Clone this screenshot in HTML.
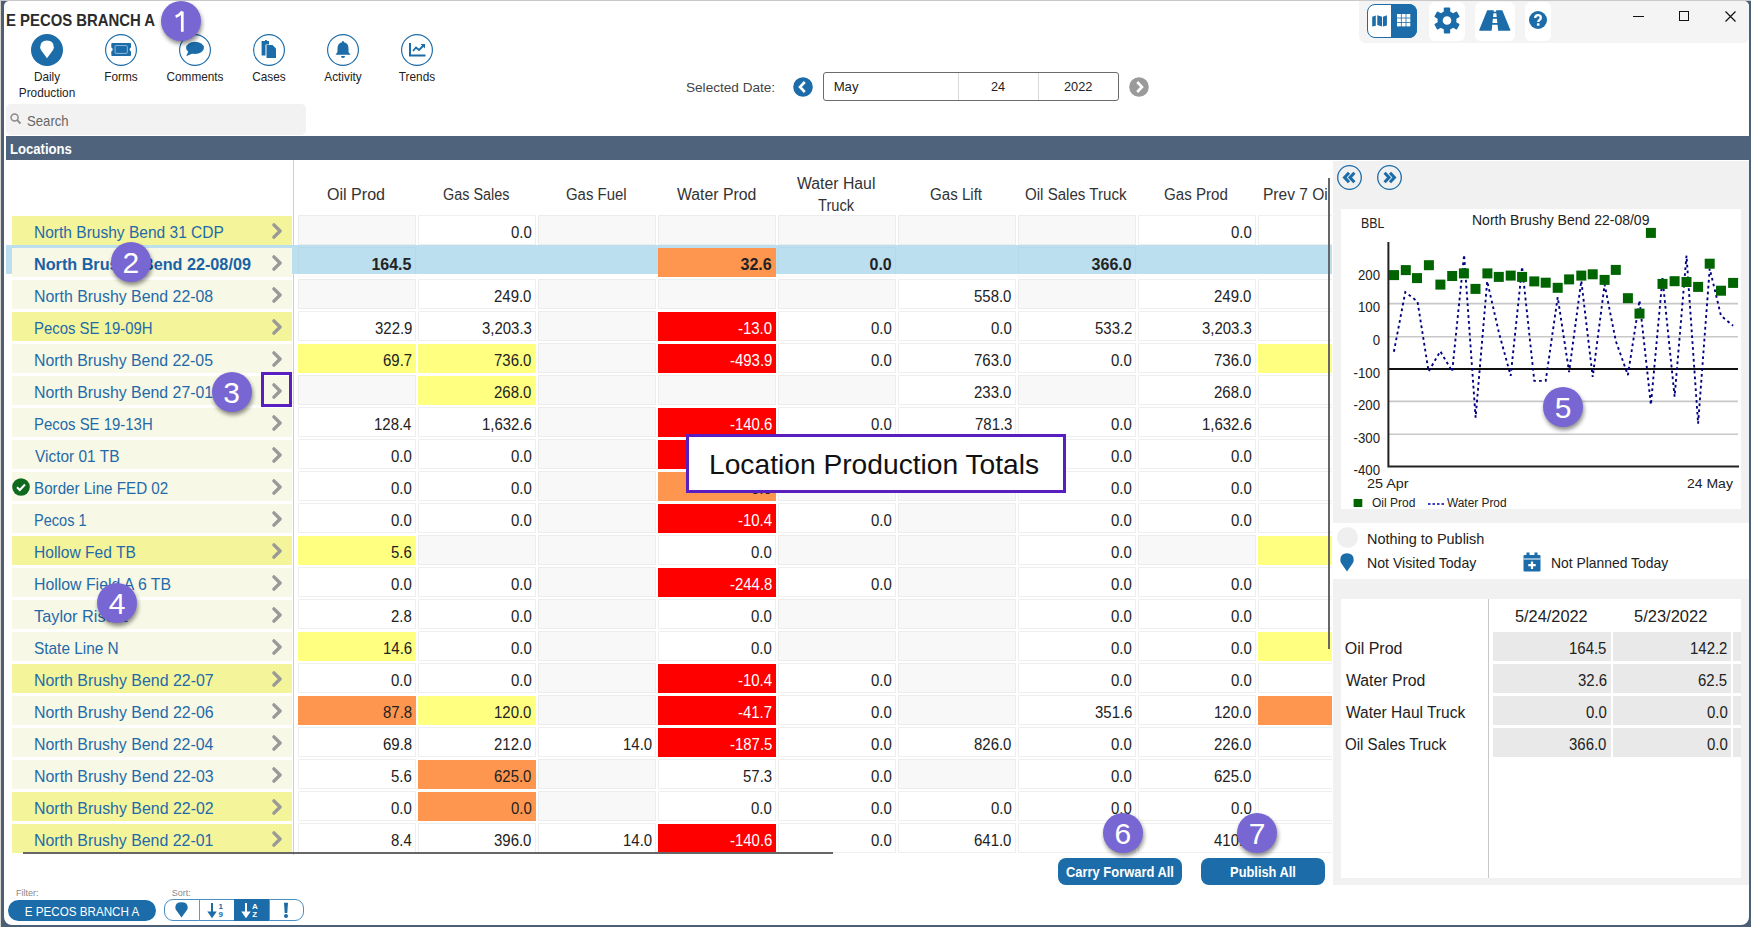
<!DOCTYPE html><html><head><meta charset="utf-8"><style>
html,body{margin:0;padding:0;}
body{width:1751px;height:927px;overflow:hidden;position:relative;background:#4b5f77;font-family:"Liberation Sans",sans-serif;}
.t{position:absolute;white-space:pre;}
.b{position:absolute;box-sizing:border-box;}
svg{position:absolute;overflow:visible;}
.badge{position:absolute;width:40px;height:40px;border-radius:50%;background:#7866d3;color:#fff;font-size:30px;line-height:41px;text-align:center;box-shadow:1px 3px 4px rgba(0,0,0,0.45);font-family:"Liberation Sans",sans-serif;}
</style></head><body>
<div class="b" style="left:0px;top:0px;width:1751px;height:1px;background:#c9c9c9;"></div>
<div class="b" style="left:0px;top:1px;width:1px;height:926px;background:#d9d6cf;"></div>
<div class="b" style="left:4px;top:1px;width:1745px;height:924px;background:#fff;border-radius:5px 5px 8px 8px;overflow:hidden;"></div>
<div class="b" style="left:1359px;top:1px;width:390px;height:42px;background:#f4f4f4;border-radius:0 6px 6px 7px;"></div>
<div class="b" style="left:1367px;top:4px;width:50px;height:34px;border:1px solid #1b6ca8;border-radius:8px;background:#fff;"></div>
<div class="b" style="left:1391px;top:4px;width:26px;height:34px;background:#1b6ca8;border-radius:0 8px 8px 0;"></div>
<svg style="left:1371px;top:12px" width="18" height="18" viewBox="0 0 18 18"><path d="M1.2 4.7 L4.8 3.5 L4.8 13.7 L1.2 14.6 Z M6.3 3.2 L11.1 4.7 L11.1 14.6 L6.3 13.1 Z M12 4.7 L15.9 3.2 L15.9 13.4 L12 14.6 Z" fill="#1b6ca8"/></svg>
<svg style="left:1397px;top:14px" width="14" height="13" viewBox="0 0 14 13"><g fill="#fff"><rect x="0.0" y="0.0" width="3.9" height="3.6"/><rect x="0.0" y="4.4" width="3.9" height="3.6"/><rect x="0.0" y="8.8" width="3.9" height="3.6"/><rect x="4.7" y="0.0" width="3.9" height="3.6"/><rect x="4.7" y="4.4" width="3.9" height="3.6"/><rect x="4.7" y="8.8" width="3.9" height="3.6"/><rect x="9.4" y="0.0" width="3.9" height="3.6"/><rect x="9.4" y="4.4" width="3.9" height="3.6"/><rect x="9.4" y="8.8" width="3.9" height="3.6"/></g></svg>
<div class="b" style="left:1429px;top:2px;width:36px;height:39px;background:#fff;border-radius:6px;"></div>
<svg style="left:1434px;top:7px" width="26" height="27" viewBox="-13 -13.5 26 27"><g fill="#1b6ca8"><rect x="-3.2" y="-13" width="6.4" height="6" rx="1" transform="rotate(0)"/><rect x="-3.2" y="-13" width="6.4" height="6" rx="1" transform="rotate(60)"/><rect x="-3.2" y="-13" width="6.4" height="6" rx="1" transform="rotate(120)"/><rect x="-3.2" y="-13" width="6.4" height="6" rx="1" transform="rotate(180)"/><rect x="-3.2" y="-13" width="6.4" height="6" rx="1" transform="rotate(240)"/><rect x="-3.2" y="-13" width="6.4" height="6" rx="1" transform="rotate(300)"/><circle r="9.5"/></g><circle r="4.3" fill="#fff"/></svg>
<div class="b" style="left:1475px;top:2px;width:40px;height:39px;background:#fff;border-radius:6px;"></div>
<svg style="left:1479px;top:10px" width="33" height="22" viewBox="0 0 33 22"><path d="M8.2 0.2 L14.78 0.2 L12.63 20.7 L0.9 20.7 Q0 20.7 0.2 19.9 Z M17.02 0.2 L23.3 0.2 L31.4 19.9 Q31.6 20.7 30.7 20.7 L19.17 20.7 Z M14.319999999999999 1.7 L17.48 1.7 L17.650000000000002 3.3 L14.149999999999999 3.3 ZM13.78 6.9 L18.02 6.9 L18.220000000000002 8.8 L13.58 8.8 ZM13.149999999999999 12.9 L18.650000000000002 12.9 L18.85 14.8 L12.95 14.8 Z" fill="#1b6ca8"/></svg>
<div class="b" style="left:1525px;top:2px;width:26px;height:39px;background:#fff;border-radius:6px;"></div>
<svg style="left:1529px;top:11px" width="18" height="18" viewBox="0 0 18 18"><circle cx="9" cy="9" r="9" fill="#1b6ca8"/><path d="M6.2 7 Q6.2 4.2 9 4.2 Q11.8 4.2 11.8 6.8 Q11.8 8.3 10.2 9.2 Q9.2 9.8 9.2 11" stroke="#fff" stroke-width="2.3" fill="none"/><rect x="7.9" y="12.3" width="2.6" height="2.4" fill="#fff"/></svg>
<div class="b" style="left:1633px;top:16px;width:11px;height:1.2px;background:#111;"></div>
<div class="b" style="left:1679px;top:11px;width:10px;height:10px;border:1.2px solid #111;"></div>
<svg style="left:1724.5px;top:11px" width="11" height="11" viewBox="0 0 11 11"><path d="M0.5 0.5 L10.5 10.5 M10.5 0.5 L0.5 10.5" stroke="#111" stroke-width="1.2"/></svg>
<div class="t" style="left:5.96px;top:11px;font-size:15.9px;line-height:19px;color:#2b2b2b;font-weight:700;transform:scaleX(0.9361);transform-origin:0 0;">E PECOS BRANCH A</div>
<svg style="left:31px;top:34px" width="32" height="32" viewBox="0 0 32 32"><circle cx="16" cy="16" r="16" fill="#1b6ca8"/><path d="M16 24.3 L10.5 16.8 Q9.2 15 9.2 13.3 Q9.2 6.6 16 6.6 Q22.8 6.6 22.8 13.3 Q22.8 15 21.5 16.8 Z" fill="#fff"/></svg>
<div class="t" style="left:-253px;width:600px;text-align:center;top:70px;font-size:12.6px;line-height:15px;color:#222;font-weight:400;transform:scaleX(0.9370);transform-origin:50% 0;">Daily</div>
<div class="t" style="left:-253px;width:600px;text-align:center;top:86px;font-size:12.6px;line-height:15px;color:#222;font-weight:400;transform:scaleX(0.9370);transform-origin:50% 0;">Production</div>
<svg style="left:105px;top:34px" width="32" height="32" viewBox="0 0 32 32"><circle cx="16" cy="16" r="15.4" fill="none" stroke="#1b6ca8" stroke-width="1.15"/><path d="M7.3 9 L25 9 Q26 9 26 10 L26 13.6 Q24.6 14.2 24.6 15.5 Q24.6 16.8 26 17.4 L26 21 Q26 22 25 22 L7.3 22 Q6.3 22 6.3 21 L6.3 17.4 Q7.7 16.8 7.7 15.5 Q7.7 14.2 6.3 13.6 L6.3 10 Q6.3 9 7.3 9 Z" fill="#1b6ca8"/><rect x="10.1" y="11.6" width="12.2" height="7.8" rx="0.8" fill="none" stroke="#9cc2e2" stroke-width="0.9"/></svg>
<div class="t" style="left:-179px;width:600px;text-align:center;top:70px;font-size:12.6px;line-height:15px;color:#222;font-weight:400;transform:scaleX(0.9370);transform-origin:50% 0;">Forms</div>
<svg style="left:179px;top:34px" width="32" height="32" viewBox="0 0 32 32"><circle cx="16" cy="16" r="15.4" fill="none" stroke="#1b6ca8" stroke-width="1.15"/><ellipse cx="16" cy="13.9" rx="8.9" ry="6.2" fill="#1b6ca8"/><path d="M9.8 16.5 L7.2 22.3 L14 19.3 Z" fill="#1b6ca8"/></svg>
<div class="t" style="left:-105px;width:600px;text-align:center;top:70px;font-size:12.6px;line-height:15px;color:#222;font-weight:400;transform:scaleX(0.9370);transform-origin:50% 0;">Comments</div>
<svg style="left:253px;top:34px" width="32" height="32" viewBox="0 0 32 32"><circle cx="16" cy="16" r="15.4" fill="none" stroke="#1b6ca8" stroke-width="1.15"/><path d="M8.6 7 L12 7 L12 6 L13.8 6 L13.8 7 L16 7 L16 10.5 L12.5 10.5 L12.5 21.5 L8.6 21.5 Z" fill="#1b6ca8"/><path d="M13.5 11 L19.5 11 L23 14.5 L23 24 L13.5 24 Z" fill="#1b6ca8"/></svg>
<div class="t" style="left:-31px;width:600px;text-align:center;top:70px;font-size:12.6px;line-height:15px;color:#222;font-weight:400;transform:scaleX(0.9370);transform-origin:50% 0;">Cases</div>
<svg style="left:327px;top:34px" width="32" height="32" viewBox="0 0 32 32"><circle cx="16" cy="16" r="15.4" fill="none" stroke="#1b6ca8" stroke-width="1.15"/><path d="M16 7 Q17 7 17 8.2 Q21.5 9.2 21.5 14.5 L21.5 18 L23.5 20.8 L8.5 20.8 L10.5 18 L10.5 14.5 Q10.5 9.2 15 8.2 Q15 7 16 7 Z" fill="#1b6ca8"/><path d="M14 22 L18 22 Q18 24 16 24 Q14 24 14 22 Z" fill="#1b6ca8"/></svg>
<div class="t" style="left:43px;width:600px;text-align:center;top:70px;font-size:12.6px;line-height:15px;color:#222;font-weight:400;transform:scaleX(0.9370);transform-origin:50% 0;">Activity</div>
<svg style="left:401px;top:34px" width="32" height="32" viewBox="0 0 32 32"><circle cx="16" cy="16" r="15.4" fill="none" stroke="#1b6ca8" stroke-width="1.15"/><path d="M9 9 L9 21.5 L24.5 21.5" fill="none" stroke="#1b6ca8" stroke-width="2"/><path d="M12 17 L15 13.5 L18 16 L22.5 11.5" fill="none" stroke="#1b6ca8" stroke-width="1.8"/><path d="M19.5 10 L24 10 L24 14.5 Z" fill="#1b6ca8"/></svg>
<div class="t" style="left:117px;width:600px;text-align:center;top:70px;font-size:12.6px;line-height:15px;color:#222;font-weight:400;transform:scaleX(0.9370);transform-origin:50% 0;">Trends</div>
<div class="t" style="left:685.62px;top:80px;font-size:13.4px;line-height:16px;color:#444;font-weight:400;transform:scaleX(1.0148);transform-origin:0 0;">Selected Date:</div>
<svg style="left:793px;top:76.5px" width="20" height="20" viewBox="0 0 20 20"><circle cx="10" cy="10" r="9.8" fill="#1b6ca8"/><path d="M11.8 5 L7 10 L11.8 15" fill="none" stroke="#fff" stroke-width="2.6"/></svg>
<div class="b" style="left:823px;top:72px;width:296px;height:29px;border:1px solid #6b6b6b;border-radius:3px;background:#fff;"></div>
<div class="b" style="left:958px;top:73px;width:1px;height:27px;background:#d9d9d9;"></div>
<div class="b" style="left:1038px;top:73px;width:1px;height:27px;background:#d9d9d9;"></div>
<div class="t" style="left:833.64px;top:79px;font-size:13.2px;line-height:16px;color:#222;font-weight:400;">May</div>
<div class="t" style="left:991.17px;top:79px;font-size:13.2px;line-height:16px;color:#222;font-weight:400;transform:scaleX(0.9615);transform-origin:0 0;">24</div>
<div class="t" style="left:1064.26px;top:79px;font-size:13.2px;line-height:16px;color:#222;font-weight:400;transform:scaleX(0.9674);transform-origin:0 0;">2022</div>
<svg style="left:1129px;top:77px" width="20" height="20" viewBox="0 0 20 20"><circle cx="10" cy="10" r="9.8" fill="#9a9a9a"/><path d="M8.2 5 L13 10 L8.2 15" fill="none" stroke="#fff" stroke-width="2.6"/></svg>
<div class="b" style="left:6px;top:104px;width:300px;height:31px;background:#f2f2f2;border-radius:5px;"></div>
<svg style="left:10px;top:113px" width="12" height="12" viewBox="0 0 12 12"><circle cx="4.6" cy="4.6" r="3.5" fill="none" stroke="#8a8a8a" stroke-width="1.5"/><path d="M7.2 7.2 L10.5 10.5" stroke="#8a8a8a" stroke-width="1.8"/></svg>
<div class="t" style="left:26.84px;top:113px;font-size:14.1px;line-height:17px;color:#666;font-weight:400;transform:scaleX(0.9324);transform-origin:0 0;">Search</div>
<div class="b" style="left:6px;top:136px;width:1745px;height:24px;background:#4f647c;"></div>
<div class="t" style="left:9.5px;top:141px;font-size:14.5px;line-height:17px;color:#fff;font-weight:700;transform:scaleX(0.9040);transform-origin:0 0;">Locations</div>
<div class="b" style="left:0;top:0;width:1332px;height:855px;overflow:hidden;">
<div class="t" style="left:327.0px;top:185px;font-size:16px;line-height:19px;color:#333;font-weight:400;transform:scaleX(1.0036);transform-origin:0 0;">Oil Prod</div>
<div class="t" style="left:442.68px;top:185px;font-size:16px;line-height:19px;color:#333;font-weight:400;transform:scaleX(0.8996);transform-origin:0 0;">Gas Sales</div>
<div class="t" style="left:565.95px;top:185px;font-size:16px;line-height:19px;color:#333;font-weight:400;transform:scaleX(0.9327);transform-origin:0 0;">Gas Fuel</div>
<div class="t" style="left:677.0px;top:185px;font-size:16px;line-height:19px;color:#333;font-weight:400;transform:scaleX(0.9874);transform-origin:0 0;">Water Prod</div>
<div class="t" style="left:796.9px;top:174px;font-size:16px;line-height:19px;color:#333;font-weight:400;transform:scaleX(0.9872);transform-origin:0 0;">Water Haul</div>
<div class="t" style="left:817.91px;top:196px;font-size:16px;line-height:19px;color:#333;font-weight:400;transform:scaleX(0.9170);transform-origin:0 0;">Truck</div>
<div class="t" style="left:929.84px;top:185px;font-size:16px;line-height:19px;color:#333;font-weight:400;transform:scaleX(0.9440);transform-origin:0 0;">Gas Lift</div>
<div class="t" style="left:1025.05px;top:185px;font-size:16px;line-height:19px;color:#333;font-weight:400;transform:scaleX(0.9436);transform-origin:0 0;">Oil Sales Truck</div>
<div class="t" style="left:1164.04px;top:185px;font-size:16px;line-height:19px;color:#333;font-weight:400;transform:scaleX(0.9443);transform-origin:0 0;">Gas Prod</div>
<div class="b" style="left:1200px;top:170px;width:127px;height:40px;overflow:hidden;">
<div class="b" style="left:-1200px;top:-170px;width:1751px;height:300px;">
<div class="t" style="left:1263.3px;top:185px;font-size:16px;line-height:19px;color:#333;font-weight:400;transform:scaleX(0.9720);transform-origin:0 0;">Prev 7 Oil Prod</div>
</div></div>
<div class="b" style="left:293px;top:160px;width:1px;height:695px;background:#cfcfcf;"></div>
<div class="b" style="left:6px;top:245px;width:1326px;height:29px;background:#bbdfee;"></div>
<div class="b" style="left:12px;top:216px;width:280px;height:29px;background:#f4f49a;"></div>
<div class="t" style="left:33.56px;top:222px;font-size:16.4px;line-height:20px;color:#1f6aaa;font-weight:400;transform:scaleX(0.9474);transform-origin:0 0;">North Brushy Bend 31 CDP</div>
<svg style="left:271px;top:223px" width="14" height="16" viewBox="0 0 14 16"><path d="M2.9 1.9 L9.1 8 L2.9 14.1" fill="none" stroke="#999" stroke-width="3.4" stroke-linecap="round" stroke-linejoin="round"/></svg>
<div class="b" style="left:298px;top:215px;width:118px;height:30px;background:#f8f8f8;border:1px solid #ececec;"></div>
<div class="b" style="left:418px;top:215px;width:118px;height:30px;background:#fff;border:1px solid #efefef;"></div>
<div class="t" style="left:511.2px;top:223px;font-size:16px;line-height:19px;color:#222;font-weight:400;transform:scaleX(0.9350);transform-origin:0 0;">0.0</div>
<div class="b" style="left:538px;top:215px;width:118px;height:30px;background:#f8f8f8;border:1px solid #ececec;"></div>
<div class="b" style="left:658px;top:215px;width:118px;height:30px;background:#f8f8f8;border:1px solid #ececec;"></div>
<div class="b" style="left:778px;top:215px;width:118px;height:30px;background:#f8f8f8;border:1px solid #ececec;"></div>
<div class="b" style="left:898px;top:215px;width:118px;height:30px;background:#f8f8f8;border:1px solid #ececec;"></div>
<div class="b" style="left:1018px;top:215px;width:118px;height:30px;background:#f8f8f8;border:1px solid #ececec;"></div>
<div class="b" style="left:1138px;top:215px;width:118px;height:30px;background:#fff;border:1px solid #efefef;"></div>
<div class="t" style="left:1231.2px;top:223px;font-size:16px;line-height:19px;color:#222;font-weight:400;transform:scaleX(0.9350);transform-origin:0 0;">0.0</div>
<div class="b" style="left:1258px;top:215px;width:118px;height:30px;background:#fff;border:1px solid #efefef;"></div>
<div class="b" style="left:12px;top:248px;width:280px;height:29px;background:#f8f8e6;"></div>
<div class="t" style="left:33.93px;top:255px;font-size:16px;line-height:19px;color:#1862a6;font-weight:700;transform:scaleX(1.0122);transform-origin:0 0;">North Brushy Bend 22-08/09</div>
<svg style="left:271px;top:255px" width="14" height="16" viewBox="0 0 14 16"><path d="M2.9 1.9 L9.1 8 L2.9 14.1" fill="none" stroke="#999" stroke-width="3.4" stroke-linecap="round" stroke-linejoin="round"/></svg>
<div class="b" style="left:298px;top:247px;width:118px;height:30px;border:1px solid rgba(0,0,0,0.03);"></div>
<div class="t" style="left:371.42px;top:255px;font-size:16px;line-height:19px;color:#222;font-weight:700;">164.5</div>
<div class="b" style="left:658px;top:248px;width:118px;height:29px;background:#ff964f;"></div>
<div class="t" style="left:740.54px;top:255px;font-size:16px;line-height:19px;color:#222;font-weight:700;">32.6</div>
<div class="b" style="left:778px;top:247px;width:118px;height:30px;border:1px solid rgba(0,0,0,0.03);"></div>
<div class="t" style="left:869.5px;top:255px;font-size:16px;line-height:19px;color:#222;font-weight:700;">0.0</div>
<div class="b" style="left:1018px;top:247px;width:118px;height:30px;border:1px solid rgba(0,0,0,0.03);"></div>
<div class="t" style="left:1091.58px;top:255px;font-size:16px;line-height:19px;color:#222;font-weight:700;">366.0</div>
<div class="b" style="left:12px;top:280px;width:280px;height:29px;background:#f8f8e6;"></div>
<div class="t" style="left:33.53px;top:286px;font-size:16.4px;line-height:20px;color:#1f6aaa;font-weight:400;transform:scaleX(0.9687);transform-origin:0 0;">North Brushy Bend 22-08</div>
<svg style="left:271px;top:287px" width="14" height="16" viewBox="0 0 14 16"><path d="M2.9 1.9 L9.1 8 L2.9 14.1" fill="none" stroke="#999" stroke-width="3.4" stroke-linecap="round" stroke-linejoin="round"/></svg>
<div class="b" style="left:298px;top:279px;width:118px;height:30px;background:#f8f8f8;border:1px solid #ececec;"></div>
<div class="b" style="left:418px;top:279px;width:118px;height:30px;background:#fff;border:1px solid #efefef;"></div>
<div class="t" style="left:494.45px;top:287px;font-size:16px;line-height:19px;color:#222;font-weight:400;transform:scaleX(0.9350);transform-origin:0 0;">249.0</div>
<div class="b" style="left:538px;top:279px;width:118px;height:30px;background:#f8f8f8;border:1px solid #ececec;"></div>
<div class="b" style="left:658px;top:279px;width:118px;height:30px;background:#f8f8f8;border:1px solid #ececec;"></div>
<div class="b" style="left:778px;top:279px;width:118px;height:30px;background:#f8f8f8;border:1px solid #ececec;"></div>
<div class="b" style="left:898px;top:279px;width:118px;height:30px;background:#fff;border:1px solid #efefef;"></div>
<div class="t" style="left:974.45px;top:287px;font-size:16px;line-height:19px;color:#222;font-weight:400;transform:scaleX(0.9350);transform-origin:0 0;">558.0</div>
<div class="b" style="left:1018px;top:279px;width:118px;height:30px;background:#f8f8f8;border:1px solid #ececec;"></div>
<div class="b" style="left:1138px;top:279px;width:118px;height:30px;background:#fff;border:1px solid #efefef;"></div>
<div class="t" style="left:1214.45px;top:287px;font-size:16px;line-height:19px;color:#222;font-weight:400;transform:scaleX(0.9350);transform-origin:0 0;">249.0</div>
<div class="b" style="left:1258px;top:279px;width:118px;height:30px;background:#fff;border:1px solid #efefef;"></div>
<div class="b" style="left:12px;top:312px;width:280px;height:29px;background:#f4f49a;"></div>
<div class="t" style="left:33.61px;top:318px;font-size:16.4px;line-height:20px;color:#1f6aaa;font-weight:400;transform:scaleX(0.9103);transform-origin:0 0;">Pecos SE 19-09H</div>
<svg style="left:271px;top:319px" width="14" height="16" viewBox="0 0 14 16"><path d="M2.9 1.9 L9.1 8 L2.9 14.1" fill="none" stroke="#999" stroke-width="3.4" stroke-linecap="round" stroke-linejoin="round"/></svg>
<div class="b" style="left:298px;top:311px;width:118px;height:30px;background:#fff;border:1px solid #efefef;"></div>
<div class="t" style="left:374.6px;top:319px;font-size:16px;line-height:19px;color:#222;font-weight:400;transform:scaleX(0.9350);transform-origin:0 0;">322.9</div>
<div class="b" style="left:418px;top:311px;width:118px;height:30px;background:#fff;border:1px solid #efefef;"></div>
<div class="t" style="left:482.18px;top:319px;font-size:16px;line-height:19px;color:#222;font-weight:400;transform:scaleX(0.9350);transform-origin:0 0;">3,203.3</div>
<div class="b" style="left:538px;top:311px;width:118px;height:30px;background:#f8f8f8;border:1px solid #ececec;"></div>
<div class="b" style="left:658px;top:312px;width:118px;height:29px;background:#ff0000;"></div>
<div class="t" style="left:737.89px;top:319px;font-size:16px;line-height:19px;color:#fff;font-weight:400;transform:scaleX(0.9350);transform-origin:0 0;">-13.0</div>
<div class="b" style="left:778px;top:311px;width:118px;height:30px;background:#fff;border:1px solid #efefef;"></div>
<div class="t" style="left:871.2px;top:319px;font-size:16px;line-height:19px;color:#222;font-weight:400;transform:scaleX(0.9350);transform-origin:0 0;">0.0</div>
<div class="b" style="left:898px;top:311px;width:118px;height:30px;background:#fff;border:1px solid #efefef;"></div>
<div class="t" style="left:991.2px;top:319px;font-size:16px;line-height:19px;color:#222;font-weight:400;transform:scaleX(0.9350);transform-origin:0 0;">0.0</div>
<div class="b" style="left:1018px;top:311px;width:118px;height:30px;background:#fff;border:1px solid #efefef;"></div>
<div class="t" style="left:1094.6px;top:319px;font-size:16px;line-height:19px;color:#222;font-weight:400;transform:scaleX(0.9350);transform-origin:0 0;">533.2</div>
<div class="b" style="left:1138px;top:311px;width:118px;height:30px;background:#fff;border:1px solid #efefef;"></div>
<div class="t" style="left:1202.18px;top:319px;font-size:16px;line-height:19px;color:#222;font-weight:400;transform:scaleX(0.9350);transform-origin:0 0;">3,203.3</div>
<div class="b" style="left:1258px;top:311px;width:118px;height:30px;background:#fff;border:1px solid #efefef;"></div>
<div class="b" style="left:12px;top:344px;width:280px;height:29px;background:#f8f8e6;"></div>
<div class="t" style="left:33.53px;top:350px;font-size:16.4px;line-height:20px;color:#1f6aaa;font-weight:400;transform:scaleX(0.9679);transform-origin:0 0;">North Brushy Bend 22-05</div>
<svg style="left:271px;top:351px" width="14" height="16" viewBox="0 0 14 16"><path d="M2.9 1.9 L9.1 8 L2.9 14.1" fill="none" stroke="#999" stroke-width="3.4" stroke-linecap="round" stroke-linejoin="round"/></svg>
<div class="b" style="left:298px;top:344px;width:118px;height:29px;background:#ffff80;"></div>
<div class="t" style="left:382.98px;top:351px;font-size:16px;line-height:19px;color:#222;font-weight:400;transform:scaleX(0.9350);transform-origin:0 0;">69.7</div>
<div class="b" style="left:418px;top:344px;width:118px;height:29px;background:#ffff80;"></div>
<div class="t" style="left:494.45px;top:351px;font-size:16px;line-height:19px;color:#222;font-weight:400;transform:scaleX(0.9350);transform-origin:0 0;">736.0</div>
<div class="b" style="left:538px;top:343px;width:118px;height:30px;background:#f8f8f8;border:1px solid #ececec;"></div>
<div class="b" style="left:658px;top:344px;width:118px;height:29px;background:#ff0000;"></div>
<div class="t" style="left:729.66px;top:351px;font-size:16px;line-height:19px;color:#fff;font-weight:400;transform:scaleX(0.9350);transform-origin:0 0;">-493.9</div>
<div class="b" style="left:778px;top:343px;width:118px;height:30px;background:#fff;border:1px solid #efefef;"></div>
<div class="t" style="left:871.2px;top:351px;font-size:16px;line-height:19px;color:#222;font-weight:400;transform:scaleX(0.9350);transform-origin:0 0;">0.0</div>
<div class="b" style="left:898px;top:343px;width:118px;height:30px;background:#fff;border:1px solid #efefef;"></div>
<div class="t" style="left:974.45px;top:351px;font-size:16px;line-height:19px;color:#222;font-weight:400;transform:scaleX(0.9350);transform-origin:0 0;">763.0</div>
<div class="b" style="left:1018px;top:343px;width:118px;height:30px;background:#fff;border:1px solid #efefef;"></div>
<div class="t" style="left:1111.2px;top:351px;font-size:16px;line-height:19px;color:#222;font-weight:400;transform:scaleX(0.9350);transform-origin:0 0;">0.0</div>
<div class="b" style="left:1138px;top:343px;width:118px;height:30px;background:#fff;border:1px solid #efefef;"></div>
<div class="t" style="left:1214.45px;top:351px;font-size:16px;line-height:19px;color:#222;font-weight:400;transform:scaleX(0.9350);transform-origin:0 0;">736.0</div>
<div class="b" style="left:1258px;top:344px;width:118px;height:29px;background:#ffff80;"></div>
<div class="b" style="left:12px;top:376px;width:280px;height:29px;background:#f8f8e6;"></div>
<div class="t" style="left:33.53px;top:382px;font-size:16.4px;line-height:20px;color:#1f6aaa;font-weight:400;transform:scaleX(0.9687);transform-origin:0 0;">North Brushy Bend 27-01</div>
<svg style="left:271px;top:383px" width="14" height="16" viewBox="0 0 14 16"><path d="M2.9 1.9 L9.1 8 L2.9 14.1" fill="none" stroke="#999" stroke-width="3.4" stroke-linecap="round" stroke-linejoin="round"/></svg>
<div class="b" style="left:298px;top:375px;width:118px;height:30px;background:#f8f8f8;border:1px solid #ececec;"></div>
<div class="b" style="left:418px;top:376px;width:118px;height:29px;background:#ffff80;"></div>
<div class="t" style="left:494.45px;top:383px;font-size:16px;line-height:19px;color:#222;font-weight:400;transform:scaleX(0.9350);transform-origin:0 0;">268.0</div>
<div class="b" style="left:538px;top:375px;width:118px;height:30px;background:#f8f8f8;border:1px solid #ececec;"></div>
<div class="b" style="left:658px;top:375px;width:118px;height:30px;background:#f8f8f8;border:1px solid #ececec;"></div>
<div class="b" style="left:778px;top:375px;width:118px;height:30px;background:#f8f8f8;border:1px solid #ececec;"></div>
<div class="b" style="left:898px;top:375px;width:118px;height:30px;background:#fff;border:1px solid #efefef;"></div>
<div class="t" style="left:974.45px;top:383px;font-size:16px;line-height:19px;color:#222;font-weight:400;transform:scaleX(0.9350);transform-origin:0 0;">233.0</div>
<div class="b" style="left:1018px;top:375px;width:118px;height:30px;background:#f8f8f8;border:1px solid #ececec;"></div>
<div class="b" style="left:1138px;top:375px;width:118px;height:30px;background:#fff;border:1px solid #efefef;"></div>
<div class="t" style="left:1214.45px;top:383px;font-size:16px;line-height:19px;color:#222;font-weight:400;transform:scaleX(0.9350);transform-origin:0 0;">268.0</div>
<div class="b" style="left:1258px;top:375px;width:118px;height:30px;background:#fff;border:1px solid #efefef;"></div>
<div class="b" style="left:12px;top:408px;width:280px;height:29px;background:#f8f8e6;"></div>
<div class="t" style="left:33.6px;top:414px;font-size:16.4px;line-height:20px;color:#1f6aaa;font-weight:400;transform:scaleX(0.9111);transform-origin:0 0;">Pecos SE 19-13H</div>
<svg style="left:271px;top:415px" width="14" height="16" viewBox="0 0 14 16"><path d="M2.9 1.9 L9.1 8 L2.9 14.1" fill="none" stroke="#999" stroke-width="3.4" stroke-linecap="round" stroke-linejoin="round"/></svg>
<div class="b" style="left:298px;top:407px;width:118px;height:30px;background:#fff;border:1px solid #efefef;"></div>
<div class="t" style="left:374.3px;top:415px;font-size:16px;line-height:19px;color:#222;font-weight:400;transform:scaleX(0.9350);transform-origin:0 0;">128.4</div>
<div class="b" style="left:418px;top:407px;width:118px;height:30px;background:#fff;border:1px solid #efefef;"></div>
<div class="t" style="left:482.18px;top:415px;font-size:16px;line-height:19px;color:#222;font-weight:400;transform:scaleX(0.9350);transform-origin:0 0;">1,632.6</div>
<div class="b" style="left:538px;top:407px;width:118px;height:30px;background:#f8f8f8;border:1px solid #ececec;"></div>
<div class="b" style="left:658px;top:408px;width:118px;height:29px;background:#ff0000;"></div>
<div class="t" style="left:729.66px;top:415px;font-size:16px;line-height:19px;color:#fff;font-weight:400;transform:scaleX(0.9350);transform-origin:0 0;">-140.6</div>
<div class="b" style="left:778px;top:407px;width:118px;height:30px;background:#fff;border:1px solid #efefef;"></div>
<div class="t" style="left:871.2px;top:415px;font-size:16px;line-height:19px;color:#222;font-weight:400;transform:scaleX(0.9350);transform-origin:0 0;">0.0</div>
<div class="b" style="left:898px;top:407px;width:118px;height:30px;background:#fff;border:1px solid #efefef;"></div>
<div class="t" style="left:974.6px;top:415px;font-size:16px;line-height:19px;color:#222;font-weight:400;transform:scaleX(0.9350);transform-origin:0 0;">781.3</div>
<div class="b" style="left:1018px;top:407px;width:118px;height:30px;background:#fff;border:1px solid #efefef;"></div>
<div class="t" style="left:1111.2px;top:415px;font-size:16px;line-height:19px;color:#222;font-weight:400;transform:scaleX(0.9350);transform-origin:0 0;">0.0</div>
<div class="b" style="left:1138px;top:407px;width:118px;height:30px;background:#fff;border:1px solid #efefef;"></div>
<div class="t" style="left:1202.18px;top:415px;font-size:16px;line-height:19px;color:#222;font-weight:400;transform:scaleX(0.9350);transform-origin:0 0;">1,632.6</div>
<div class="b" style="left:1258px;top:407px;width:118px;height:30px;background:#fff;border:1px solid #efefef;"></div>
<div class="b" style="left:12px;top:440px;width:280px;height:29px;background:#f8f8e6;"></div>
<div class="t" style="left:34.8px;top:446px;font-size:16.4px;line-height:20px;color:#1f6aaa;font-weight:400;transform:scaleX(0.9428);transform-origin:0 0;">Victor 01 TB</div>
<svg style="left:271px;top:447px" width="14" height="16" viewBox="0 0 14 16"><path d="M2.9 1.9 L9.1 8 L2.9 14.1" fill="none" stroke="#999" stroke-width="3.4" stroke-linecap="round" stroke-linejoin="round"/></svg>
<div class="b" style="left:298px;top:439px;width:118px;height:30px;background:#fff;border:1px solid #efefef;"></div>
<div class="t" style="left:391.2px;top:447px;font-size:16px;line-height:19px;color:#222;font-weight:400;transform:scaleX(0.9350);transform-origin:0 0;">0.0</div>
<div class="b" style="left:418px;top:439px;width:118px;height:30px;background:#fff;border:1px solid #efefef;"></div>
<div class="t" style="left:511.2px;top:447px;font-size:16px;line-height:19px;color:#222;font-weight:400;transform:scaleX(0.9350);transform-origin:0 0;">0.0</div>
<div class="b" style="left:538px;top:439px;width:118px;height:30px;background:#f8f8f8;border:1px solid #ececec;"></div>
<div class="b" style="left:658px;top:440px;width:118px;height:29px;background:#ff0000;"></div>
<div class="t" style="left:729.66px;top:447px;font-size:16px;line-height:19px;color:#fff;font-weight:400;transform:scaleX(0.9350);transform-origin:0 0;">-140.6</div>
<div class="b" style="left:778px;top:439px;width:118px;height:30px;background:#f8f8f8;border:1px solid #ececec;"></div>
<div class="b" style="left:898px;top:439px;width:118px;height:30px;background:#f8f8f8;border:1px solid #ececec;"></div>
<div class="b" style="left:1018px;top:439px;width:118px;height:30px;background:#fff;border:1px solid #efefef;"></div>
<div class="t" style="left:1111.2px;top:447px;font-size:16px;line-height:19px;color:#222;font-weight:400;transform:scaleX(0.9350);transform-origin:0 0;">0.0</div>
<div class="b" style="left:1138px;top:439px;width:118px;height:30px;background:#fff;border:1px solid #efefef;"></div>
<div class="t" style="left:1231.2px;top:447px;font-size:16px;line-height:19px;color:#222;font-weight:400;transform:scaleX(0.9350);transform-origin:0 0;">0.0</div>
<div class="b" style="left:1258px;top:439px;width:118px;height:30px;background:#fff;border:1px solid #efefef;"></div>
<div class="b" style="left:12px;top:472px;width:280px;height:29px;background:#f8f8e6;"></div>
<div class="t" style="left:33.58px;top:478px;font-size:16.4px;line-height:20px;color:#1f6aaa;font-weight:400;transform:scaleX(0.9269);transform-origin:0 0;">Border Line FED 02</div>
<svg style="left:271px;top:479px" width="14" height="16" viewBox="0 0 14 16"><path d="M2.9 1.9 L9.1 8 L2.9 14.1" fill="none" stroke="#999" stroke-width="3.4" stroke-linecap="round" stroke-linejoin="round"/></svg>
<div class="b" style="left:298px;top:471px;width:118px;height:30px;background:#fff;border:1px solid #efefef;"></div>
<div class="t" style="left:391.2px;top:479px;font-size:16px;line-height:19px;color:#222;font-weight:400;transform:scaleX(0.9350);transform-origin:0 0;">0.0</div>
<div class="b" style="left:418px;top:471px;width:118px;height:30px;background:#fff;border:1px solid #efefef;"></div>
<div class="t" style="left:511.2px;top:479px;font-size:16px;line-height:19px;color:#222;font-weight:400;transform:scaleX(0.9350);transform-origin:0 0;">0.0</div>
<div class="b" style="left:538px;top:471px;width:118px;height:30px;background:#f8f8f8;border:1px solid #ececec;"></div>
<div class="b" style="left:658px;top:472px;width:118px;height:29px;background:#ff964f;"></div>
<div class="t" style="left:751.2px;top:479px;font-size:16px;line-height:19px;color:#222;font-weight:400;transform:scaleX(0.9350);transform-origin:0 0;">0.0</div>
<div class="b" style="left:778px;top:471px;width:118px;height:30px;background:#f8f8f8;border:1px solid #ececec;"></div>
<div class="b" style="left:898px;top:471px;width:118px;height:30px;background:#f8f8f8;border:1px solid #ececec;"></div>
<div class="b" style="left:1018px;top:471px;width:118px;height:30px;background:#fff;border:1px solid #efefef;"></div>
<div class="t" style="left:1111.2px;top:479px;font-size:16px;line-height:19px;color:#222;font-weight:400;transform:scaleX(0.9350);transform-origin:0 0;">0.0</div>
<div class="b" style="left:1138px;top:471px;width:118px;height:30px;background:#fff;border:1px solid #efefef;"></div>
<div class="t" style="left:1231.2px;top:479px;font-size:16px;line-height:19px;color:#222;font-weight:400;transform:scaleX(0.9350);transform-origin:0 0;">0.0</div>
<div class="b" style="left:1258px;top:471px;width:118px;height:30px;background:#fff;border:1px solid #efefef;"></div>
<div class="b" style="left:12px;top:504px;width:280px;height:29px;background:#f8f8e6;"></div>
<div class="t" style="left:33.64px;top:510px;font-size:16.4px;line-height:20px;color:#1f6aaa;font-weight:400;transform:scaleX(0.8876);transform-origin:0 0;">Pecos 1</div>
<svg style="left:271px;top:511px" width="14" height="16" viewBox="0 0 14 16"><path d="M2.9 1.9 L9.1 8 L2.9 14.1" fill="none" stroke="#999" stroke-width="3.4" stroke-linecap="round" stroke-linejoin="round"/></svg>
<div class="b" style="left:298px;top:503px;width:118px;height:30px;background:#fff;border:1px solid #efefef;"></div>
<div class="t" style="left:391.2px;top:511px;font-size:16px;line-height:19px;color:#222;font-weight:400;transform:scaleX(0.9350);transform-origin:0 0;">0.0</div>
<div class="b" style="left:418px;top:503px;width:118px;height:30px;background:#fff;border:1px solid #efefef;"></div>
<div class="t" style="left:511.2px;top:511px;font-size:16px;line-height:19px;color:#222;font-weight:400;transform:scaleX(0.9350);transform-origin:0 0;">0.0</div>
<div class="b" style="left:538px;top:503px;width:118px;height:30px;background:#f8f8f8;border:1px solid #ececec;"></div>
<div class="b" style="left:658px;top:504px;width:118px;height:29px;background:#ff0000;"></div>
<div class="t" style="left:737.74px;top:511px;font-size:16px;line-height:19px;color:#fff;font-weight:400;transform:scaleX(0.9350);transform-origin:0 0;">-10.4</div>
<div class="b" style="left:778px;top:503px;width:118px;height:30px;background:#fff;border:1px solid #efefef;"></div>
<div class="t" style="left:871.2px;top:511px;font-size:16px;line-height:19px;color:#222;font-weight:400;transform:scaleX(0.9350);transform-origin:0 0;">0.0</div>
<div class="b" style="left:898px;top:503px;width:118px;height:30px;background:#f8f8f8;border:1px solid #ececec;"></div>
<div class="b" style="left:1018px;top:503px;width:118px;height:30px;background:#fff;border:1px solid #efefef;"></div>
<div class="t" style="left:1111.2px;top:511px;font-size:16px;line-height:19px;color:#222;font-weight:400;transform:scaleX(0.9350);transform-origin:0 0;">0.0</div>
<div class="b" style="left:1138px;top:503px;width:118px;height:30px;background:#fff;border:1px solid #efefef;"></div>
<div class="t" style="left:1231.2px;top:511px;font-size:16px;line-height:19px;color:#222;font-weight:400;transform:scaleX(0.9350);transform-origin:0 0;">0.0</div>
<div class="b" style="left:1258px;top:503px;width:118px;height:30px;background:#fff;border:1px solid #efefef;"></div>
<div class="b" style="left:12px;top:536px;width:280px;height:29px;background:#f4f49a;"></div>
<div class="t" style="left:33.55px;top:542px;font-size:16.4px;line-height:20px;color:#1f6aaa;font-weight:400;transform:scaleX(0.9503);transform-origin:0 0;">Hollow Fed TB</div>
<svg style="left:271px;top:543px" width="14" height="16" viewBox="0 0 14 16"><path d="M2.9 1.9 L9.1 8 L2.9 14.1" fill="none" stroke="#999" stroke-width="3.4" stroke-linecap="round" stroke-linejoin="round"/></svg>
<div class="b" style="left:298px;top:536px;width:118px;height:29px;background:#ffff80;"></div>
<div class="t" style="left:391.35px;top:543px;font-size:16px;line-height:19px;color:#222;font-weight:400;transform:scaleX(0.9350);transform-origin:0 0;">5.6</div>
<div class="b" style="left:418px;top:535px;width:118px;height:30px;background:#f8f8f8;border:1px solid #ececec;"></div>
<div class="b" style="left:538px;top:535px;width:118px;height:30px;background:#f8f8f8;border:1px solid #ececec;"></div>
<div class="b" style="left:658px;top:535px;width:118px;height:30px;background:#fff;border:1px solid #efefef;"></div>
<div class="t" style="left:751.2px;top:543px;font-size:16px;line-height:19px;color:#222;font-weight:400;transform:scaleX(0.9350);transform-origin:0 0;">0.0</div>
<div class="b" style="left:778px;top:535px;width:118px;height:30px;background:#f8f8f8;border:1px solid #ececec;"></div>
<div class="b" style="left:898px;top:535px;width:118px;height:30px;background:#f8f8f8;border:1px solid #ececec;"></div>
<div class="b" style="left:1018px;top:535px;width:118px;height:30px;background:#fff;border:1px solid #efefef;"></div>
<div class="t" style="left:1111.2px;top:543px;font-size:16px;line-height:19px;color:#222;font-weight:400;transform:scaleX(0.9350);transform-origin:0 0;">0.0</div>
<div class="b" style="left:1138px;top:535px;width:118px;height:30px;background:#f8f8f8;border:1px solid #ececec;"></div>
<div class="b" style="left:1258px;top:536px;width:118px;height:29px;background:#ffff80;"></div>
<div class="b" style="left:12px;top:568px;width:280px;height:29px;background:#f8f8e6;"></div>
<div class="t" style="left:33.53px;top:574px;font-size:16.4px;line-height:20px;color:#1f6aaa;font-weight:400;transform:scaleX(0.9665);transform-origin:0 0;">Hollow Field A 6 TB</div>
<svg style="left:271px;top:575px" width="14" height="16" viewBox="0 0 14 16"><path d="M2.9 1.9 L9.1 8 L2.9 14.1" fill="none" stroke="#999" stroke-width="3.4" stroke-linecap="round" stroke-linejoin="round"/></svg>
<div class="b" style="left:298px;top:567px;width:118px;height:30px;background:#fff;border:1px solid #efefef;"></div>
<div class="t" style="left:391.2px;top:575px;font-size:16px;line-height:19px;color:#222;font-weight:400;transform:scaleX(0.9350);transform-origin:0 0;">0.0</div>
<div class="b" style="left:418px;top:567px;width:118px;height:30px;background:#fff;border:1px solid #efefef;"></div>
<div class="t" style="left:511.2px;top:575px;font-size:16px;line-height:19px;color:#222;font-weight:400;transform:scaleX(0.9350);transform-origin:0 0;">0.0</div>
<div class="b" style="left:538px;top:567px;width:118px;height:30px;background:#f8f8f8;border:1px solid #ececec;"></div>
<div class="b" style="left:658px;top:568px;width:118px;height:29px;background:#ff0000;"></div>
<div class="t" style="left:729.66px;top:575px;font-size:16px;line-height:19px;color:#fff;font-weight:400;transform:scaleX(0.9350);transform-origin:0 0;">-244.8</div>
<div class="b" style="left:778px;top:567px;width:118px;height:30px;background:#fff;border:1px solid #efefef;"></div>
<div class="t" style="left:871.2px;top:575px;font-size:16px;line-height:19px;color:#222;font-weight:400;transform:scaleX(0.9350);transform-origin:0 0;">0.0</div>
<div class="b" style="left:898px;top:567px;width:118px;height:30px;background:#f8f8f8;border:1px solid #ececec;"></div>
<div class="b" style="left:1018px;top:567px;width:118px;height:30px;background:#fff;border:1px solid #efefef;"></div>
<div class="t" style="left:1111.2px;top:575px;font-size:16px;line-height:19px;color:#222;font-weight:400;transform:scaleX(0.9350);transform-origin:0 0;">0.0</div>
<div class="b" style="left:1138px;top:567px;width:118px;height:30px;background:#fff;border:1px solid #efefef;"></div>
<div class="t" style="left:1231.2px;top:575px;font-size:16px;line-height:19px;color:#222;font-weight:400;transform:scaleX(0.9350);transform-origin:0 0;">0.0</div>
<div class="b" style="left:1258px;top:567px;width:118px;height:30px;background:#fff;border:1px solid #efefef;"></div>
<div class="b" style="left:12px;top:600px;width:280px;height:29px;background:#f8f8e6;"></div>
<div class="t" style="left:34.47px;top:606px;font-size:16.4px;line-height:20px;color:#1f6aaa;font-weight:400;transform:scaleX(0.9953);transform-origin:0 0;">Taylor Rise 1</div>
<svg style="left:271px;top:607px" width="14" height="16" viewBox="0 0 14 16"><path d="M2.9 1.9 L9.1 8 L2.9 14.1" fill="none" stroke="#999" stroke-width="3.4" stroke-linecap="round" stroke-linejoin="round"/></svg>
<div class="b" style="left:298px;top:599px;width:118px;height:30px;background:#fff;border:1px solid #efefef;"></div>
<div class="t" style="left:391.35px;top:607px;font-size:16px;line-height:19px;color:#222;font-weight:400;transform:scaleX(0.9350);transform-origin:0 0;">2.8</div>
<div class="b" style="left:418px;top:599px;width:118px;height:30px;background:#fff;border:1px solid #efefef;"></div>
<div class="t" style="left:511.2px;top:607px;font-size:16px;line-height:19px;color:#222;font-weight:400;transform:scaleX(0.9350);transform-origin:0 0;">0.0</div>
<div class="b" style="left:538px;top:599px;width:118px;height:30px;background:#f8f8f8;border:1px solid #ececec;"></div>
<div class="b" style="left:658px;top:599px;width:118px;height:30px;background:#fff;border:1px solid #efefef;"></div>
<div class="t" style="left:751.2px;top:607px;font-size:16px;line-height:19px;color:#222;font-weight:400;transform:scaleX(0.9350);transform-origin:0 0;">0.0</div>
<div class="b" style="left:778px;top:599px;width:118px;height:30px;background:#f8f8f8;border:1px solid #ececec;"></div>
<div class="b" style="left:898px;top:599px;width:118px;height:30px;background:#f8f8f8;border:1px solid #ececec;"></div>
<div class="b" style="left:1018px;top:599px;width:118px;height:30px;background:#fff;border:1px solid #efefef;"></div>
<div class="t" style="left:1111.2px;top:607px;font-size:16px;line-height:19px;color:#222;font-weight:400;transform:scaleX(0.9350);transform-origin:0 0;">0.0</div>
<div class="b" style="left:1138px;top:599px;width:118px;height:30px;background:#fff;border:1px solid #efefef;"></div>
<div class="t" style="left:1231.2px;top:607px;font-size:16px;line-height:19px;color:#222;font-weight:400;transform:scaleX(0.9350);transform-origin:0 0;">0.0</div>
<div class="b" style="left:1258px;top:599px;width:118px;height:30px;background:#fff;border:1px solid #efefef;"></div>
<div class="b" style="left:12px;top:632px;width:280px;height:29px;background:#f8f8e6;"></div>
<div class="t" style="left:34.03px;top:638px;font-size:16.4px;line-height:20px;color:#1f6aaa;font-weight:400;transform:scaleX(0.9390);transform-origin:0 0;">State Line N</div>
<svg style="left:271px;top:639px" width="14" height="16" viewBox="0 0 14 16"><path d="M2.9 1.9 L9.1 8 L2.9 14.1" fill="none" stroke="#999" stroke-width="3.4" stroke-linecap="round" stroke-linejoin="round"/></svg>
<div class="b" style="left:298px;top:632px;width:118px;height:29px;background:#ffff80;"></div>
<div class="t" style="left:382.98px;top:639px;font-size:16px;line-height:19px;color:#222;font-weight:400;transform:scaleX(0.9350);transform-origin:0 0;">14.6</div>
<div class="b" style="left:418px;top:631px;width:118px;height:30px;background:#fff;border:1px solid #efefef;"></div>
<div class="t" style="left:511.2px;top:639px;font-size:16px;line-height:19px;color:#222;font-weight:400;transform:scaleX(0.9350);transform-origin:0 0;">0.0</div>
<div class="b" style="left:538px;top:631px;width:118px;height:30px;background:#f8f8f8;border:1px solid #ececec;"></div>
<div class="b" style="left:658px;top:631px;width:118px;height:30px;background:#fff;border:1px solid #efefef;"></div>
<div class="t" style="left:751.2px;top:639px;font-size:16px;line-height:19px;color:#222;font-weight:400;transform:scaleX(0.9350);transform-origin:0 0;">0.0</div>
<div class="b" style="left:778px;top:631px;width:118px;height:30px;background:#f8f8f8;border:1px solid #ececec;"></div>
<div class="b" style="left:898px;top:631px;width:118px;height:30px;background:#f8f8f8;border:1px solid #ececec;"></div>
<div class="b" style="left:1018px;top:631px;width:118px;height:30px;background:#fff;border:1px solid #efefef;"></div>
<div class="t" style="left:1111.2px;top:639px;font-size:16px;line-height:19px;color:#222;font-weight:400;transform:scaleX(0.9350);transform-origin:0 0;">0.0</div>
<div class="b" style="left:1138px;top:631px;width:118px;height:30px;background:#fff;border:1px solid #efefef;"></div>
<div class="t" style="left:1231.2px;top:639px;font-size:16px;line-height:19px;color:#222;font-weight:400;transform:scaleX(0.9350);transform-origin:0 0;">0.0</div>
<div class="b" style="left:1258px;top:632px;width:118px;height:29px;background:#ffff80;"></div>
<div class="b" style="left:12px;top:664px;width:280px;height:29px;background:#f4f49a;"></div>
<div class="t" style="left:33.53px;top:670px;font-size:16.4px;line-height:20px;color:#1f6aaa;font-weight:400;transform:scaleX(0.9715);transform-origin:0 0;">North Brushy Bend 22-07</div>
<svg style="left:271px;top:671px" width="14" height="16" viewBox="0 0 14 16"><path d="M2.9 1.9 L9.1 8 L2.9 14.1" fill="none" stroke="#999" stroke-width="3.4" stroke-linecap="round" stroke-linejoin="round"/></svg>
<div class="b" style="left:298px;top:663px;width:118px;height:30px;background:#fff;border:1px solid #efefef;"></div>
<div class="t" style="left:391.2px;top:671px;font-size:16px;line-height:19px;color:#222;font-weight:400;transform:scaleX(0.9350);transform-origin:0 0;">0.0</div>
<div class="b" style="left:418px;top:663px;width:118px;height:30px;background:#fff;border:1px solid #efefef;"></div>
<div class="t" style="left:511.2px;top:671px;font-size:16px;line-height:19px;color:#222;font-weight:400;transform:scaleX(0.9350);transform-origin:0 0;">0.0</div>
<div class="b" style="left:538px;top:663px;width:118px;height:30px;background:#f8f8f8;border:1px solid #ececec;"></div>
<div class="b" style="left:658px;top:664px;width:118px;height:29px;background:#ff0000;"></div>
<div class="t" style="left:737.74px;top:671px;font-size:16px;line-height:19px;color:#fff;font-weight:400;transform:scaleX(0.9350);transform-origin:0 0;">-10.4</div>
<div class="b" style="left:778px;top:663px;width:118px;height:30px;background:#fff;border:1px solid #efefef;"></div>
<div class="t" style="left:871.2px;top:671px;font-size:16px;line-height:19px;color:#222;font-weight:400;transform:scaleX(0.9350);transform-origin:0 0;">0.0</div>
<div class="b" style="left:898px;top:663px;width:118px;height:30px;background:#f8f8f8;border:1px solid #ececec;"></div>
<div class="b" style="left:1018px;top:663px;width:118px;height:30px;background:#fff;border:1px solid #efefef;"></div>
<div class="t" style="left:1111.2px;top:671px;font-size:16px;line-height:19px;color:#222;font-weight:400;transform:scaleX(0.9350);transform-origin:0 0;">0.0</div>
<div class="b" style="left:1138px;top:663px;width:118px;height:30px;background:#fff;border:1px solid #efefef;"></div>
<div class="t" style="left:1231.2px;top:671px;font-size:16px;line-height:19px;color:#222;font-weight:400;transform:scaleX(0.9350);transform-origin:0 0;">0.0</div>
<div class="b" style="left:1258px;top:663px;width:118px;height:30px;background:#fff;border:1px solid #efefef;"></div>
<div class="b" style="left:12px;top:696px;width:280px;height:29px;background:#f8f8e6;"></div>
<div class="t" style="left:33.53px;top:702px;font-size:16.4px;line-height:20px;color:#1f6aaa;font-weight:400;transform:scaleX(0.9715);transform-origin:0 0;">North Brushy Bend 22-06</div>
<svg style="left:271px;top:703px" width="14" height="16" viewBox="0 0 14 16"><path d="M2.9 1.9 L9.1 8 L2.9 14.1" fill="none" stroke="#999" stroke-width="3.4" stroke-linecap="round" stroke-linejoin="round"/></svg>
<div class="b" style="left:298px;top:696px;width:118px;height:29px;background:#ff964f;"></div>
<div class="t" style="left:382.98px;top:703px;font-size:16px;line-height:19px;color:#222;font-weight:400;transform:scaleX(0.9350);transform-origin:0 0;">87.8</div>
<div class="b" style="left:418px;top:696px;width:118px;height:29px;background:#ffff80;"></div>
<div class="t" style="left:494.45px;top:703px;font-size:16px;line-height:19px;color:#222;font-weight:400;transform:scaleX(0.9350);transform-origin:0 0;">120.0</div>
<div class="b" style="left:538px;top:695px;width:118px;height:30px;background:#f8f8f8;border:1px solid #ececec;"></div>
<div class="b" style="left:658px;top:696px;width:118px;height:29px;background:#ff0000;"></div>
<div class="t" style="left:738.04px;top:703px;font-size:16px;line-height:19px;color:#fff;font-weight:400;transform:scaleX(0.9350);transform-origin:0 0;">-41.7</div>
<div class="b" style="left:778px;top:695px;width:118px;height:30px;background:#fff;border:1px solid #efefef;"></div>
<div class="t" style="left:871.2px;top:703px;font-size:16px;line-height:19px;color:#222;font-weight:400;transform:scaleX(0.9350);transform-origin:0 0;">0.0</div>
<div class="b" style="left:898px;top:695px;width:118px;height:30px;background:#f8f8f8;border:1px solid #ececec;"></div>
<div class="b" style="left:1018px;top:695px;width:118px;height:30px;background:#fff;border:1px solid #efefef;"></div>
<div class="t" style="left:1094.6px;top:703px;font-size:16px;line-height:19px;color:#222;font-weight:400;transform:scaleX(0.9350);transform-origin:0 0;">351.6</div>
<div class="b" style="left:1138px;top:695px;width:118px;height:30px;background:#fff;border:1px solid #efefef;"></div>
<div class="t" style="left:1214.45px;top:703px;font-size:16px;line-height:19px;color:#222;font-weight:400;transform:scaleX(0.9350);transform-origin:0 0;">120.0</div>
<div class="b" style="left:1258px;top:696px;width:118px;height:29px;background:#ff964f;"></div>
<div class="b" style="left:12px;top:728px;width:280px;height:29px;background:#f8f8e6;"></div>
<div class="t" style="left:33.53px;top:734px;font-size:16.4px;line-height:20px;color:#1f6aaa;font-weight:400;transform:scaleX(0.9697);transform-origin:0 0;">North Brushy Bend 22-04</div>
<svg style="left:271px;top:735px" width="14" height="16" viewBox="0 0 14 16"><path d="M2.9 1.9 L9.1 8 L2.9 14.1" fill="none" stroke="#999" stroke-width="3.4" stroke-linecap="round" stroke-linejoin="round"/></svg>
<div class="b" style="left:298px;top:727px;width:118px;height:30px;background:#fff;border:1px solid #efefef;"></div>
<div class="t" style="left:382.98px;top:735px;font-size:16px;line-height:19px;color:#222;font-weight:400;transform:scaleX(0.9350);transform-origin:0 0;">69.8</div>
<div class="b" style="left:418px;top:727px;width:118px;height:30px;background:#fff;border:1px solid #efefef;"></div>
<div class="t" style="left:494.45px;top:735px;font-size:16px;line-height:19px;color:#222;font-weight:400;transform:scaleX(0.9350);transform-origin:0 0;">212.0</div>
<div class="b" style="left:538px;top:727px;width:118px;height:30px;background:#fff;border:1px solid #efefef;"></div>
<div class="t" style="left:622.83px;top:735px;font-size:16px;line-height:19px;color:#222;font-weight:400;transform:scaleX(0.9350);transform-origin:0 0;">14.0</div>
<div class="b" style="left:658px;top:728px;width:118px;height:29px;background:#ff0000;"></div>
<div class="t" style="left:729.51px;top:735px;font-size:16px;line-height:19px;color:#fff;font-weight:400;transform:scaleX(0.9350);transform-origin:0 0;">-187.5</div>
<div class="b" style="left:778px;top:727px;width:118px;height:30px;background:#fff;border:1px solid #efefef;"></div>
<div class="t" style="left:871.2px;top:735px;font-size:16px;line-height:19px;color:#222;font-weight:400;transform:scaleX(0.9350);transform-origin:0 0;">0.0</div>
<div class="b" style="left:898px;top:727px;width:118px;height:30px;background:#fff;border:1px solid #efefef;"></div>
<div class="t" style="left:974.45px;top:735px;font-size:16px;line-height:19px;color:#222;font-weight:400;transform:scaleX(0.9350);transform-origin:0 0;">826.0</div>
<div class="b" style="left:1018px;top:727px;width:118px;height:30px;background:#fff;border:1px solid #efefef;"></div>
<div class="t" style="left:1111.2px;top:735px;font-size:16px;line-height:19px;color:#222;font-weight:400;transform:scaleX(0.9350);transform-origin:0 0;">0.0</div>
<div class="b" style="left:1138px;top:727px;width:118px;height:30px;background:#fff;border:1px solid #efefef;"></div>
<div class="t" style="left:1214.45px;top:735px;font-size:16px;line-height:19px;color:#222;font-weight:400;transform:scaleX(0.9350);transform-origin:0 0;">226.0</div>
<div class="b" style="left:1258px;top:727px;width:118px;height:30px;background:#fff;border:1px solid #efefef;"></div>
<div class="b" style="left:12px;top:760px;width:280px;height:29px;background:#f8f8e6;"></div>
<div class="t" style="left:33.53px;top:766px;font-size:16.4px;line-height:20px;color:#1f6aaa;font-weight:400;transform:scaleX(0.9715);transform-origin:0 0;">North Brushy Bend 22-03</div>
<svg style="left:271px;top:767px" width="14" height="16" viewBox="0 0 14 16"><path d="M2.9 1.9 L9.1 8 L2.9 14.1" fill="none" stroke="#999" stroke-width="3.4" stroke-linecap="round" stroke-linejoin="round"/></svg>
<div class="b" style="left:298px;top:759px;width:118px;height:30px;background:#fff;border:1px solid #efefef;"></div>
<div class="t" style="left:391.35px;top:767px;font-size:16px;line-height:19px;color:#222;font-weight:400;transform:scaleX(0.9350);transform-origin:0 0;">5.6</div>
<div class="b" style="left:418px;top:760px;width:118px;height:29px;background:#ff964f;"></div>
<div class="t" style="left:494.45px;top:767px;font-size:16px;line-height:19px;color:#222;font-weight:400;transform:scaleX(0.9350);transform-origin:0 0;">625.0</div>
<div class="b" style="left:538px;top:759px;width:118px;height:30px;background:#f8f8f8;border:1px solid #ececec;"></div>
<div class="b" style="left:658px;top:759px;width:118px;height:30px;background:#fff;border:1px solid #efefef;"></div>
<div class="t" style="left:742.98px;top:767px;font-size:16px;line-height:19px;color:#222;font-weight:400;transform:scaleX(0.9350);transform-origin:0 0;">57.3</div>
<div class="b" style="left:778px;top:759px;width:118px;height:30px;background:#fff;border:1px solid #efefef;"></div>
<div class="t" style="left:871.2px;top:767px;font-size:16px;line-height:19px;color:#222;font-weight:400;transform:scaleX(0.9350);transform-origin:0 0;">0.0</div>
<div class="b" style="left:898px;top:759px;width:118px;height:30px;background:#f8f8f8;border:1px solid #ececec;"></div>
<div class="b" style="left:1018px;top:759px;width:118px;height:30px;background:#fff;border:1px solid #efefef;"></div>
<div class="t" style="left:1111.2px;top:767px;font-size:16px;line-height:19px;color:#222;font-weight:400;transform:scaleX(0.9350);transform-origin:0 0;">0.0</div>
<div class="b" style="left:1138px;top:759px;width:118px;height:30px;background:#fff;border:1px solid #efefef;"></div>
<div class="t" style="left:1214.45px;top:767px;font-size:16px;line-height:19px;color:#222;font-weight:400;transform:scaleX(0.9350);transform-origin:0 0;">625.0</div>
<div class="b" style="left:1258px;top:759px;width:118px;height:30px;background:#fff;border:1px solid #efefef;"></div>
<div class="b" style="left:12px;top:792px;width:280px;height:29px;background:#f4f49a;"></div>
<div class="t" style="left:33.53px;top:798px;font-size:16.4px;line-height:20px;color:#1f6aaa;font-weight:400;transform:scaleX(0.9715);transform-origin:0 0;">North Brushy Bend 22-02</div>
<svg style="left:271px;top:799px" width="14" height="16" viewBox="0 0 14 16"><path d="M2.9 1.9 L9.1 8 L2.9 14.1" fill="none" stroke="#999" stroke-width="3.4" stroke-linecap="round" stroke-linejoin="round"/></svg>
<div class="b" style="left:298px;top:791px;width:118px;height:30px;background:#fff;border:1px solid #efefef;"></div>
<div class="t" style="left:391.2px;top:799px;font-size:16px;line-height:19px;color:#222;font-weight:400;transform:scaleX(0.9350);transform-origin:0 0;">0.0</div>
<div class="b" style="left:418px;top:792px;width:118px;height:29px;background:#ff964f;"></div>
<div class="t" style="left:511.2px;top:799px;font-size:16px;line-height:19px;color:#222;font-weight:400;transform:scaleX(0.9350);transform-origin:0 0;">0.0</div>
<div class="b" style="left:538px;top:791px;width:118px;height:30px;background:#f8f8f8;border:1px solid #ececec;"></div>
<div class="b" style="left:658px;top:791px;width:118px;height:30px;background:#fff;border:1px solid #efefef;"></div>
<div class="t" style="left:751.2px;top:799px;font-size:16px;line-height:19px;color:#222;font-weight:400;transform:scaleX(0.9350);transform-origin:0 0;">0.0</div>
<div class="b" style="left:778px;top:791px;width:118px;height:30px;background:#fff;border:1px solid #efefef;"></div>
<div class="t" style="left:871.2px;top:799px;font-size:16px;line-height:19px;color:#222;font-weight:400;transform:scaleX(0.9350);transform-origin:0 0;">0.0</div>
<div class="b" style="left:898px;top:791px;width:118px;height:30px;background:#fff;border:1px solid #efefef;"></div>
<div class="t" style="left:991.2px;top:799px;font-size:16px;line-height:19px;color:#222;font-weight:400;transform:scaleX(0.9350);transform-origin:0 0;">0.0</div>
<div class="b" style="left:1018px;top:791px;width:118px;height:30px;background:#fff;border:1px solid #efefef;"></div>
<div class="t" style="left:1111.2px;top:799px;font-size:16px;line-height:19px;color:#222;font-weight:400;transform:scaleX(0.9350);transform-origin:0 0;">0.0</div>
<div class="b" style="left:1138px;top:791px;width:118px;height:30px;background:#fff;border:1px solid #efefef;"></div>
<div class="t" style="left:1231.2px;top:799px;font-size:16px;line-height:19px;color:#222;font-weight:400;transform:scaleX(0.9350);transform-origin:0 0;">0.0</div>
<div class="b" style="left:1258px;top:791px;width:118px;height:30px;background:#fff;border:1px solid #efefef;"></div>
<div class="b" style="left:12px;top:824px;width:280px;height:29px;background:#f4f49a;"></div>
<div class="t" style="left:33.53px;top:830px;font-size:16.4px;line-height:20px;color:#1f6aaa;font-weight:400;transform:scaleX(0.9698);transform-origin:0 0;">North Brushy Bend 22-01</div>
<svg style="left:271px;top:831px" width="14" height="16" viewBox="0 0 14 16"><path d="M2.9 1.9 L9.1 8 L2.9 14.1" fill="none" stroke="#999" stroke-width="3.4" stroke-linecap="round" stroke-linejoin="round"/></svg>
<div class="b" style="left:298px;top:823px;width:118px;height:30px;background:#fff;border:1px solid #efefef;"></div>
<div class="t" style="left:391.05px;top:831px;font-size:16px;line-height:19px;color:#222;font-weight:400;transform:scaleX(0.9350);transform-origin:0 0;">8.4</div>
<div class="b" style="left:418px;top:823px;width:118px;height:30px;background:#fff;border:1px solid #efefef;"></div>
<div class="t" style="left:494.45px;top:831px;font-size:16px;line-height:19px;color:#222;font-weight:400;transform:scaleX(0.9350);transform-origin:0 0;">396.0</div>
<div class="b" style="left:538px;top:823px;width:118px;height:30px;background:#fff;border:1px solid #efefef;"></div>
<div class="t" style="left:622.83px;top:831px;font-size:16px;line-height:19px;color:#222;font-weight:400;transform:scaleX(0.9350);transform-origin:0 0;">14.0</div>
<div class="b" style="left:658px;top:824px;width:118px;height:29px;background:#ff0000;"></div>
<div class="t" style="left:729.66px;top:831px;font-size:16px;line-height:19px;color:#fff;font-weight:400;transform:scaleX(0.9350);transform-origin:0 0;">-140.6</div>
<div class="b" style="left:778px;top:823px;width:118px;height:30px;background:#fff;border:1px solid #efefef;"></div>
<div class="t" style="left:871.2px;top:831px;font-size:16px;line-height:19px;color:#222;font-weight:400;transform:scaleX(0.9350);transform-origin:0 0;">0.0</div>
<div class="b" style="left:898px;top:823px;width:118px;height:30px;background:#fff;border:1px solid #efefef;"></div>
<div class="t" style="left:974.45px;top:831px;font-size:16px;line-height:19px;color:#222;font-weight:400;transform:scaleX(0.9350);transform-origin:0 0;">641.0</div>
<div class="b" style="left:1018px;top:823px;width:118px;height:30px;background:#fff;border:1px solid #efefef;"></div>
<div class="t" style="left:1111.2px;top:831px;font-size:16px;line-height:19px;color:#222;font-weight:400;transform:scaleX(0.9350);transform-origin:0 0;">0.0</div>
<div class="b" style="left:1138px;top:823px;width:118px;height:30px;background:#fff;border:1px solid #efefef;"></div>
<div class="t" style="left:1214.45px;top:831px;font-size:16px;line-height:19px;color:#222;font-weight:400;transform:scaleX(0.9350);transform-origin:0 0;">410.0</div>
<div class="b" style="left:1258px;top:823px;width:118px;height:30px;background:#fff;border:1px solid #efefef;"></div>
<svg style="left:12px;top:477.5px" width="18" height="18" viewBox="0 0 18 18"><circle cx="9" cy="9" r="8.8" fill="#0e6b1e"/><path d="M5 9.3 L7.8 12 L13 6.5" fill="none" stroke="#fff" stroke-width="2"/></svg>
</div>
<div class="b" style="left:1328px;top:178px;width:2px;height:471px;background:#666;"></div>
<div class="b" style="left:22.5px;top:852px;width:810px;height:2px;background:#666;"></div>
<div class="b" style="left:261px;top:372px;width:31px;height:35px;border:3px solid #5a1ec0;"></div>
<div class="b" style="left:686px;top:434px;width:380px;height:59px;background:#fff;border:3px solid #5a1ec0;"></div>
<div class="t" style="left:708.74px;top:448px;font-size:27.5px;line-height:33px;color:#111;font-weight:400;transform:scaleX(1.0251);transform-origin:0 0;">Location Production Totals</div>
<div class="b" style="left:1058px;top:858px;width:124px;height:27px;background:#1b6ca8;border-radius:8px;"></div>
<div class="t" style="left:820.3px;width:600px;text-align:center;top:864px;font-size:14.4px;line-height:17px;color:#fff;font-weight:700;transform:scaleX(0.8978);transform-origin:50% 0;">Carry Forward All</div>
<div class="b" style="left:1201px;top:858px;width:124px;height:27px;background:#1b6ca8;border-radius:8px;"></div>
<div class="t" style="left:963.2px;width:600px;text-align:center;top:864px;font-size:14.4px;line-height:17px;color:#fff;font-weight:700;transform:scaleX(0.8920);transform-origin:50% 0;">Publish All</div>
<div class="t" style="left:15.9px;top:888px;font-size:9px;line-height:11px;color:#888;font-weight:400;">Filter:</div>
<div class="t" style="left:171.7px;top:888px;font-size:9px;line-height:11px;color:#888;font-weight:400;">Sort:</div>
<div class="b" style="left:8px;top:899.5px;width:147.5px;height:21px;background:#1b6ca8;border-radius:11px;"></div>
<div class="t" style="left:-218.2px;width:600px;text-align:center;top:904px;font-size:13.1px;line-height:16px;color:#fff;font-weight:400;transform:scaleX(0.8886);transform-origin:50% 0;">E PECOS BRANCH A</div>
<div class="b" style="left:164px;top:899px;width:140px;height:22px;border:1px solid #4a8fc4;border-radius:9px;background:#fff;"></div>
<div class="b" style="left:234px;top:899px;width:35px;height:22px;background:#1b6ca8;"></div>
<div class="b" style="left:199px;top:899px;width:1px;height:22px;background:#5b9acb;"></div>
<div class="b" style="left:268.5px;top:899px;width:1px;height:22px;background:#5b9acb;"></div>
<svg style="left:175px;top:902px" width="13" height="16" viewBox="0 0 13 16"><path d="M6.5 15.5 L1.6 8.8 Q0.3 7 0.3 5.7 Q0.3 0.3 6.5 0.3 Q12.7 0.3 12.7 5.7 Q12.7 7 11.4 8.8 Z" fill="#1b6ca8"/></svg>
<svg style="left:208px;top:902px" width="18" height="17" viewBox="0 0 18 17"><path d="M4 1 L4 12 M1.2 10.4 L4 14.4 L6.8 10.4 Z" fill="#1b6ca8" stroke="#1b6ca8" stroke-width="2"/><text x="12.8" y="7.3" font-size="8" font-weight="700" fill="#1b6ca8" text-anchor="middle" font-family="Liberation Sans">1</text><text x="12.8" y="15.3" font-size="8" font-weight="700" fill="#1b6ca8" text-anchor="middle" font-family="Liberation Sans">9</text></svg>
<svg style="left:242px;top:902px" width="18" height="17" viewBox="0 0 18 17"><path d="M4 1 L4 12 M1.2 10.4 L4 14.4 L6.8 10.4 Z" fill="#fff" stroke="#fff" stroke-width="2"/><text x="12.8" y="7.3" font-size="8" font-weight="700" fill="#fff" text-anchor="middle" font-family="Liberation Sans">A</text><text x="12.8" y="15.3" font-size="8" font-weight="700" fill="#fff" text-anchor="middle" font-family="Liberation Sans">Z</text></svg>
<svg style="left:283px;top:902px" width="6" height="17" viewBox="0 0 6 17"><path d="M1 0.8 L5 0.8 L4.3 11 L1.7 11 Z" fill="#1b6ca8"/><circle cx="3" cy="14" r="2" fill="#1b6ca8"/></svg>
<div class="b" style="left:1333px;top:161px;width:416px;height:724px;background:#f1f1f1;"></div>
<svg style="left:1336.8px;top:164.7px" width="25" height="25" viewBox="0 0 25 25"><circle cx="12.5" cy="12.5" r="11.8" fill="none" stroke="#1b6ca8" stroke-width="1.3"/><path d="M12 7.8 L7.6 12.5 L12 17.2 M17.4 7.8 L13 12.5 L17.4 17.2" fill="none" stroke="#1b6ca8" stroke-width="3.1" stroke-linejoin="miter" stroke-linecap="butt"/></svg>
<svg style="left:1376.9px;top:164.7px" width="25" height="25" viewBox="0 0 25 25"><circle cx="12.5" cy="12.5" r="11.8" fill="none" stroke="#1b6ca8" stroke-width="1.3"/><path d="M7.6 7.8 L12 12.5 L7.6 17.2 M13 7.8 L17.4 12.5 L13 17.2" fill="none" stroke="#1b6ca8" stroke-width="3.1" stroke-linejoin="miter" stroke-linecap="butt"/></svg>
<div class="b" style="left:1341px;top:209px;width:400px;height:300px;background:#fff;"></div>
<div class="b" style="left:1333px;top:522.5px;width:416px;height:56.5px;background:#fff;"></div>
<div class="b" style="left:1341px;top:599px;width:400px;height:278.5px;background:#fff;"></div>
<svg style="left:0;top:0" width="1751" height="927" viewBox="0 0 1751 927"><line x1="1388" y1="303.6" x2="1738" y2="303.6" stroke="#c8c8c8" stroke-width="1.6"/><line x1="1388" y1="336.7" x2="1738" y2="336.7" stroke="#c8c8c8" stroke-width="1.6"/><line x1="1388" y1="401.4" x2="1738" y2="401.4" stroke="#c8c8c8" stroke-width="1.6"/><line x1="1388" y1="434.3" x2="1738" y2="434.3" stroke="#c8c8c8" stroke-width="1.6"/><line x1="1388" y1="369" x2="1738" y2="369" stroke="#111" stroke-width="1.8"/><path d="M1388.4 242 L1388.4 466.5 L1739 466.5" fill="none" stroke="#222" stroke-width="2"/><polyline points="1393.9,351.7 1405.3,292.1 1417.5,301.5 1428.6,371.5 1440.3,351.2 1452.2,371.5 1464.1,254.8 1475.6,417.6 1487.2,281.2 1499,333 1510.7,375.8 1522.1,266.7 1534.3,380.9 1545.7,380.9 1557.7,297.2 1569.1,372 1581.3,280.7 1592.7,377 1604.6,284.5 1615.8,341 1627.9,375.1 1639.5,300.4 1650.9,404.8 1662.5,278 1674.6,396.7 1686.5,255.6 1698.1,423.7 1709.7,268.6 1721,315.8 1733.1,325.7" fill="none" stroke="#000080" stroke-width="1.9" stroke-dasharray="2.7 3.2"/><rect x="1389" y="270.1" width="10" height="10" fill="#006400"/><rect x="1400.8" y="265.1" width="10" height="10" fill="#006400"/><rect x="1412" y="273.1" width="10" height="10" fill="#006400"/><rect x="1423.9" y="260.2" width="10" height="10" fill="#006400"/><rect x="1435.4" y="279.6" width="10" height="10" fill="#006400"/><rect x="1447.2" y="271" width="10" height="10" fill="#006400"/><rect x="1458.9" y="268.4" width="10" height="10" fill="#006400"/><rect x="1470.5" y="283.9" width="10" height="10" fill="#006400"/><rect x="1482.4" y="268.4" width="10" height="10" fill="#006400"/><rect x="1493.8" y="271.9" width="10" height="10" fill="#006400"/><rect x="1505.7" y="270.6" width="10" height="10" fill="#006400"/><rect x="1517.1" y="271.9" width="10" height="10" fill="#006400"/><rect x="1529.3" y="276.4" width="10" height="10" fill="#006400"/><rect x="1540.7" y="277.7" width="10" height="10" fill="#006400"/><rect x="1552.7" y="282.8" width="10" height="10" fill="#006400"/><rect x="1564.1" y="274.4" width="10" height="10" fill="#006400"/><rect x="1576.3" y="270.6" width="10" height="10" fill="#006400"/><rect x="1587.7" y="269.3" width="10" height="10" fill="#006400"/><rect x="1599.6" y="274.9" width="10" height="10" fill="#006400"/><rect x="1610.8" y="264.9" width="10" height="10" fill="#006400"/><rect x="1622.9" y="293.2" width="10" height="10" fill="#006400"/><rect x="1634.5" y="308.6" width="10" height="10" fill="#006400"/><rect x="1645.9" y="227.9" width="10" height="10" fill="#006400"/><rect x="1657.5" y="278.9" width="10" height="10" fill="#006400"/><rect x="1669.6" y="276.2" width="10" height="10" fill="#006400"/><rect x="1681.5" y="277" width="10" height="10" fill="#006400"/><rect x="1693.1" y="281.9" width="10" height="10" fill="#006400"/><rect x="1704.7" y="258.7" width="10" height="10" fill="#006400"/><rect x="1716" y="285.7" width="10" height="10" fill="#006400"/><rect x="1728.1" y="277.9" width="10" height="10" fill="#006400"/><rect x="1353.6" y="499" width="8.7" height="8" fill="#006400"/><line x1="1428" y1="504" x2="1445" y2="504" stroke="#0000aa" stroke-width="1.6" stroke-dasharray="2.5 2"/></svg>
<div class="t" style="left:780px;width:600px;text-align:right;top:267px;font-size:14px;line-height:17px;color:#222;font-weight:400;transform:scaleX(0.9450);transform-origin:100% 0;">200</div>
<div class="t" style="left:780px;width:600px;text-align:right;top:299px;font-size:14px;line-height:17px;color:#222;font-weight:400;transform:scaleX(0.9450);transform-origin:100% 0;">100</div>
<div class="t" style="left:780px;width:600px;text-align:right;top:332px;font-size:14px;line-height:17px;color:#222;font-weight:400;transform:scaleX(0.9450);transform-origin:100% 0;">0</div>
<div class="t" style="left:780px;width:600px;text-align:right;top:365px;font-size:14px;line-height:17px;color:#222;font-weight:400;transform:scaleX(0.9450);transform-origin:100% 0;">-100</div>
<div class="t" style="left:780px;width:600px;text-align:right;top:397px;font-size:14px;line-height:17px;color:#222;font-weight:400;transform:scaleX(0.9450);transform-origin:100% 0;">-200</div>
<div class="t" style="left:780px;width:600px;text-align:right;top:430px;font-size:14px;line-height:17px;color:#222;font-weight:400;transform:scaleX(0.9450);transform-origin:100% 0;">-300</div>
<div class="t" style="left:780px;width:600px;text-align:right;top:462px;font-size:14px;line-height:17px;color:#222;font-weight:400;transform:scaleX(0.9450);transform-origin:100% 0;">-400</div>
<div class="t" style="left:1360.81px;top:215px;font-size:14.4px;line-height:17px;color:#222;font-weight:400;transform:scaleX(0.8583);transform-origin:0 0;">BBL</div>
<div class="t" style="left:1472.38px;top:212px;font-size:14.5px;line-height:17px;color:#222;font-weight:400;transform:scaleX(0.9655);transform-origin:0 0;">North Brushy Bend 22-08/09</div>
<div class="t" style="left:1367.08px;top:476px;font-size:13.6px;line-height:16px;color:#222;font-weight:400;transform:scaleX(1.0601);transform-origin:0 0;">25 Apr</div>
<div class="t" style="left:1686.5px;top:476px;font-size:13.6px;line-height:16px;color:#222;font-weight:400;transform:scaleX(1.0290);transform-origin:0 0;">24 May</div>
<div class="t" style="left:1371.8px;top:496px;font-size:12.5px;line-height:15px;color:#222;font-weight:400;transform:scaleX(0.9600);transform-origin:0 0;">Oil Prod</div>
<div class="t" style="left:1446.5px;top:496px;font-size:12.5px;line-height:15px;color:#222;font-weight:400;transform:scaleX(0.9487);transform-origin:0 0;">Water Prod</div>
<div class="b" style="left:1337px;top:527px;width:21px;height:21px;border-radius:50%;background:#efefef;"></div>
<div class="t" style="left:1367.34px;top:531px;font-size:14.2px;line-height:17px;color:#222;font-weight:400;transform:scaleX(1.0188);transform-origin:0 0;">Nothing to Publish</div>
<svg style="left:1340px;top:553px" width="14" height="19" viewBox="0 0 14 19"><path d="M7 18.5 L1.6 10.8 Q0.3 9 0.3 7 Q0.3 0.3 7 0.3 Q13.7 0.3 13.7 7 Q13.7 9 12.4 10.8 Z" fill="#1b6ca8"/></svg>
<div class="t" style="left:1367.37px;top:555px;font-size:14.2px;line-height:17px;color:#222;font-weight:400;transform:scaleX(0.9953);transform-origin:0 0;">Not Visited Today</div>
<svg style="left:1523px;top:552px" width="18" height="20" viewBox="0 0 18 20"><rect x="0.5" y="3" width="17" height="16.5" rx="1" fill="#1b6ca8"/><rect x="3.5" y="0.5" width="3" height="4" fill="#1b6ca8"/><rect x="11.5" y="0.5" width="3" height="4" fill="#1b6ca8"/><rect x="0.5" y="6.5" width="17" height="1" fill="#fff"/><path d="M9 9.5 L9 17 M5.3 13.2 L12.7 13.2" stroke="#fff" stroke-width="2.2"/></svg>
<div class="t" style="left:1551.39px;top:555px;font-size:14.2px;line-height:17px;color:#222;font-weight:400;transform:scaleX(0.9792);transform-origin:0 0;">Not Planned Today</div>
<div class="b" style="left:1488px;top:599px;width:1px;height:278.5px;background:#c8c8c8;"></div>
<div class="t" style="left:1514.85px;top:607px;font-size:15.9px;line-height:19px;color:#222;font-weight:400;transform:scaleX(1.0271);transform-origin:0 0;">5/24/2022</div>
<div class="t" style="left:1634.34px;top:607px;font-size:15.9px;line-height:19px;color:#222;font-weight:400;transform:scaleX(1.0372);transform-origin:0 0;">5/23/2022</div>
<div class="b" style="left:1341px;top:599px;width:400px;height:278px;overflow:hidden;">
<div class="b" style="left:151.5px;top:33px;width:118px;height:29px;background:#e9e9e9;"></div>
<div class="b" style="left:272px;top:33px;width:118px;height:29px;background:#e9e9e9;"></div>
<div class="b" style="left:392px;top:33px;width:118px;height:29px;background:#e9e9e9;"></div>
<div class="b" style="left:151.5px;top:65px;width:118px;height:29px;background:#e9e9e9;"></div>
<div class="b" style="left:272px;top:65px;width:118px;height:29px;background:#e9e9e9;"></div>
<div class="b" style="left:392px;top:65px;width:118px;height:29px;background:#e9e9e9;"></div>
<div class="b" style="left:151.5px;top:97px;width:118px;height:29px;background:#e9e9e9;"></div>
<div class="b" style="left:272px;top:97px;width:118px;height:29px;background:#e9e9e9;"></div>
<div class="b" style="left:392px;top:97px;width:118px;height:29px;background:#e9e9e9;"></div>
<div class="b" style="left:151.5px;top:129px;width:118px;height:29px;background:#e9e9e9;"></div>
<div class="b" style="left:272px;top:129px;width:118px;height:29px;background:#e9e9e9;"></div>
<div class="b" style="left:392px;top:129px;width:118px;height:29px;background:#e9e9e9;"></div>
</div>
<div class="t" style="left:1344.7px;top:639px;font-size:16px;line-height:19px;color:#222;font-weight:400;">Oil Prod</div>
<div class="t" style="left:1569.35px;top:639px;font-size:16px;line-height:19px;color:#222;font-weight:400;transform:scaleX(0.9350);transform-origin:0 0;">164.5</div>
<div class="t" style="left:1689.9px;top:639px;font-size:16px;line-height:19px;color:#222;font-weight:400;transform:scaleX(0.9350);transform-origin:0 0;">142.2</div>
<div class="t" style="left:1345.5px;top:671px;font-size:16px;line-height:19px;color:#222;font-weight:400;transform:scaleX(0.9861);transform-origin:0 0;">Water Prod</div>
<div class="t" style="left:1577.88px;top:671px;font-size:16px;line-height:19px;color:#222;font-weight:400;transform:scaleX(0.9350);transform-origin:0 0;">32.6</div>
<div class="t" style="left:1698.13px;top:671px;font-size:16px;line-height:19px;color:#222;font-weight:400;transform:scaleX(0.9350);transform-origin:0 0;">62.5</div>
<div class="t" style="left:1345.5px;top:703px;font-size:16px;line-height:19px;color:#222;font-weight:400;transform:scaleX(0.9688);transform-origin:0 0;">Water Haul Truck</div>
<div class="t" style="left:1586.1px;top:703px;font-size:16px;line-height:19px;color:#222;font-weight:400;transform:scaleX(0.9350);transform-origin:0 0;">0.0</div>
<div class="t" style="left:1706.5px;top:703px;font-size:16px;line-height:19px;color:#222;font-weight:400;transform:scaleX(0.9350);transform-origin:0 0;">0.0</div>
<div class="t" style="left:1344.75px;top:735px;font-size:16px;line-height:19px;color:#222;font-weight:400;transform:scaleX(0.9417);transform-origin:0 0;">Oil Sales Truck</div>
<div class="t" style="left:1569.35px;top:735px;font-size:16px;line-height:19px;color:#222;font-weight:400;transform:scaleX(0.9350);transform-origin:0 0;">366.0</div>
<div class="t" style="left:1706.5px;top:735px;font-size:16px;line-height:19px;color:#222;font-weight:400;transform:scaleX(0.9350);transform-origin:0 0;">0.0</div>
<div class="badge" style="left:161px;top:0.6999999999999993px;"><svg style="left:0;top:0" width="40" height="40" viewBox="0 0 40 40"><path d="M21.3 10.6 L21.3 30.8 M14.6 15.6 Q18.6 14.6 21.3 10.6" fill="none" stroke="#fff" stroke-width="2.7"/></svg></div>
<div class="badge" style="left:110.9px;top:242.10000000000002px;">2</div>
<div class="badge" style="left:211.5px;top:372.2px;">3</div>
<div class="badge" style="left:97.2px;top:583.2px;">4</div>
<div class="badge" style="left:1543px;top:387px;">5</div>
<div class="badge" style="left:1102.9px;top:813.4px;">6</div>
<div class="badge" style="left:1237px;top:813.4px;">7</div>
</body></html>
